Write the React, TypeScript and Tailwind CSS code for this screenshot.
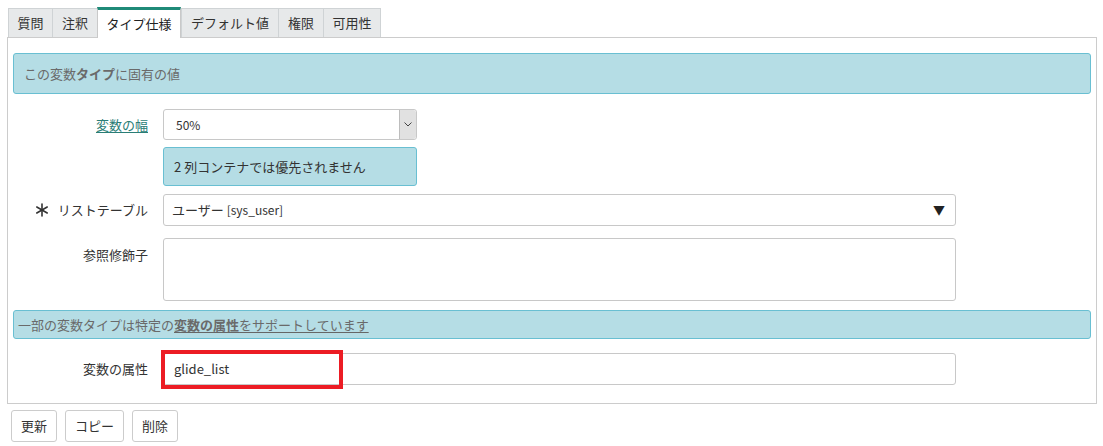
import React from 'react';

const font = { fontFamily: '"Noto Sans CJK JP", "Open Sans", sans-serif' };

const tabs = [
  { label: '質問', w: 'w-[44px]' },
  { label: '注釈', w: 'w-[45px]' },
  { label: 'タイプ仕様', w: 'w-[84px]' },
  { label: 'デフォルト値', w: 'w-[97px]' },
  { label: '権限', w: 'w-[45px]' },
  { label: '可用性', w: 'w-[58px]' },
];

export default function App() {
  return (
    <div className="w-[1103px] h-[446px] bg-white text-[13px] text-[#333] pl-[7px] pt-[6px]" style={font}>
      {/* Tabs */}
      <div className="flex h-[31px] items-end pl-[1px]">
        {tabs.map((t) => {
          const active = t.label === 'タイプ仕様';
          return active ? (
            <div
              key={t.label}
              className={`${t.w} h-[31px] flex items-center justify-center bg-white border-t-[3px] border-t-[#1f8a78] border-x border-x-[#c9c9c9] text-[#222] text-[13px] relative z-10 -mb-px`}
            >
              {t.label}
            </div>
          ) : (
            <div
              key={t.label}
              className={`${t.w} h-[29px] flex items-center justify-center bg-[#e7e9ea] border-t border-l border-[#cfd3d5] last:border-r text-[#333] text-[13px]`}
            >
              {t.label}
            </div>
          );
        })}
      </div>

      {/* Panel */}
      <div className="w-[1090px] h-[367px] border border-[#cccccc] px-[5px] pt-[15px]">
        <div className="h-[41px] rounded-[3px] bg-[#b5dde5] border border-[#69bfd2] flex items-center px-[10px] text-[#6a6a6a]">
          この変数<b className="font-bold">タイプ</b>に固有の値
        </div>

        {/* 変数の幅 */}
        <div className="flex mt-[15px]">
          <div className="w-[135px] text-right pt-[6px]">
            <a className="underline text-[#2a7d76] underline-offset-2">変数の幅</a>
          </div>
          <div className="ml-[15px] w-[254px]">
            <div className="h-[31px] flex border border-[#c8c8c8] rounded-[3px] bg-white">
              <div className="flex-1 flex items-center pl-[12px] text-[12px]">50%</div>
              <div className="w-[17px] bg-[#e1e1e1] border-l border-[#bdbdbd] flex items-center justify-center rounded-r-[3px]">
                <svg width="8" height="5" viewBox="0 0 8 5">
                  <path d="M0.5 0.5 L4 4 L7.5 0.5" fill="none" stroke="#444" strokeWidth="1" />
                </svg>
              </div>
            </div>
            <div className="mt-[7px] h-[39px] rounded-[3px] bg-[#b5dde5] border border-[#69bfd2] flex items-center px-[10px] text-[#333]">
              2 列コンテナでは優先されません
            </div>
          </div>
        </div>

        {/* リストテーブル */}
        <div className="flex mt-[8px]">
          <div className="w-[135px] flex items-center justify-end h-[32px]">
            <svg width="14" height="14" viewBox="0 0 14 14" className="mr-[9px]">
              <g stroke="#333" strokeWidth="1.6" strokeLinecap="round">
                <line x1="7" y1="1" x2="7" y2="13" />
                <line x1="1.8" y1="4" x2="12.2" y2="10" />
                <line x1="1.8" y1="10" x2="12.2" y2="4" />
              </g>
            </svg>
            リストテーブル
          </div>
          <div className="ml-[15px] w-[793px] h-[32px] border border-[#c8c8c8] rounded-[3px] flex items-center pl-[8px] pr-[10px]">
            <span className="flex-1 text-[13px]">
              ユーザー <span className="text-[12px]">[sys_user]</span>
            </span>
            <span className="text-[12px] text-[#222]">▼</span>
          </div>
        </div>

        {/* 参照修飾子 */}
        <div className="flex mt-[12px]">
          <div className="w-[135px] text-right pt-[7px]">参照修飾子</div>
          <div className="ml-[15px] w-[793px] h-[63px] border border-[#c8c8c8] rounded-[3px]" />
        </div>

        <div className="mt-[9px] h-[29px] rounded-[3px] bg-[#b5dde5] border border-[#69bfd2] flex items-center px-[4px] text-[#6a6a6a]">
          一部の変数タイプは特定の
          <span className="underline underline-offset-2 decoration-[#666]">
            <b className="font-bold">変数の属性</b>をサポートしています
          </span>
        </div>

        {/* 変数の属性 */}
        <div className="flex mt-[14px]">
          <div className="w-[135px] text-right flex items-center justify-end h-[32px]">変数の属性</div>
          <div className="ml-[15px] w-[793px] h-[32px] border border-[#c8c8c8] rounded-[3px] flex items-center relative">
            <div className="absolute left-[-3px] top-[-4px] w-[182px] h-[39px] border-[4px] border-[#ec1c24]" />
            <span className="pl-[10px] text-[13px] text-[#333]">glide_list</span>
          </div>
        </div>
      </div>

      {/* Buttons */}
      <div className="flex gap-[8px] mt-[6px] ml-[4px]">
        <button className="h-[32px] w-[46px] border border-[#cccccc] rounded-[3px] bg-white text-[13px]">更新</button>
        <button className="h-[32px] w-[59px] border border-[#cccccc] rounded-[3px] bg-white text-[13px]">コピー</button>
        <button className="h-[32px] w-[46px] border border-[#cccccc] rounded-[3px] bg-white text-[13px]">削除</button>
      </div>
    </div>
  );
}
